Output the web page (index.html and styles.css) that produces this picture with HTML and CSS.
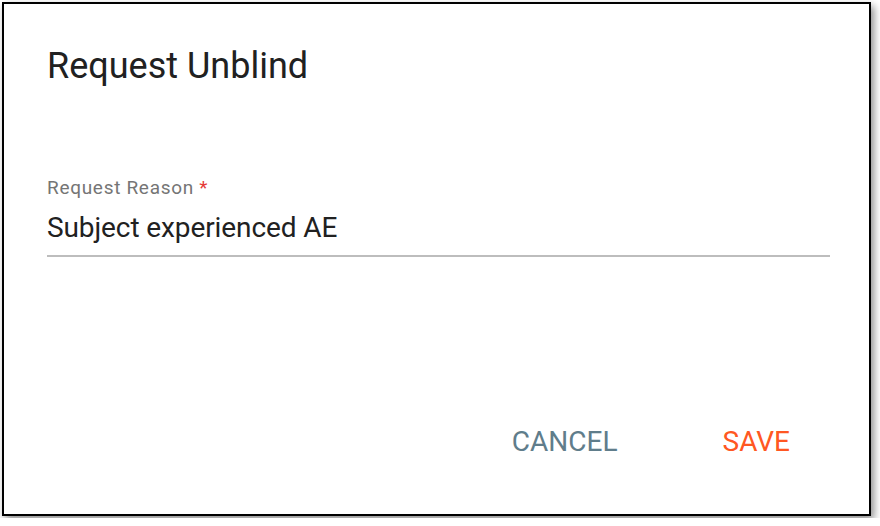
FILE: index.html
```html
<!DOCTYPE html>
<html lang="en">
<head>
  <meta charset="UTF-8">
  <meta name="viewport" content="width=device-width, initial-scale=1.0">
  <title>Request Unblind</title>
  <link rel="stylesheet" href="styles.css">
</head>
<body>
  <div class="dialog">
    <h1 class="dialog-title">Request Unblind</h1>

    <div class="field">
      <label class="field-label" for="reason">Request Reason <span class="required">*</span></label>
      <div class="field-value" id="reason">Subject experienced AE</div>
    </div>

    <div class="actions">
      <button class="btn btn-cancel">CANCEL</button>
      <button class="btn btn-save">SAVE</button>
    </div>
  </div>
</body>
</html>
```

FILE: styles.css
```css
/* Page */
body {
  margin: 0;
  background: #fff;
  font-family: Roboto, "Liberation Sans", sans-serif;
}

/* Dialog frame */
.dialog {
  box-sizing: border-box;
  width: 869px;
  height: 514px;
  margin: 2px;
  border: 2px solid #000;
  background: #fff;
  box-shadow: 3px 4px 8px rgba(0, 0, 0, 0.45);
  padding: 0 39px 0 43px;
  display: flex;
  flex-direction: column;
}

.dialog-title {
  margin: 42px 0 0;
  font-size: 36px;
  font-weight: 400;
  line-height: 40px;
  color: #212121;
}

/* Form field */
.field {
  margin-top: 92px;
  border-bottom: 2px solid #bdbdbd;
}
.field-label {
  display: block;
  font-size: 19px;
  letter-spacing: 0.7px;
  line-height: 20px;
  color: #757575;
}
.required { color: #e53935; }
.field-value {
  font-size: 28px;
  letter-spacing: -0.1px;
  line-height: 34px;
  padding: 13px 0 10px;
  color: #212121;
}

/* Buttons */
.actions {
  display: flex;
  justify-content: flex-end;
  gap: 105px;
  margin-top: auto;
  margin-bottom: 57px;
  padding-right: 40px;
}
.btn {
  border: 0;
  background: none;
  padding: 0;
  font-family: inherit;
  font-size: 28px;
  line-height: 30px;
}
.btn-cancel { color: #607d8b; }
.btn-save { color: #ff5722; }
```
